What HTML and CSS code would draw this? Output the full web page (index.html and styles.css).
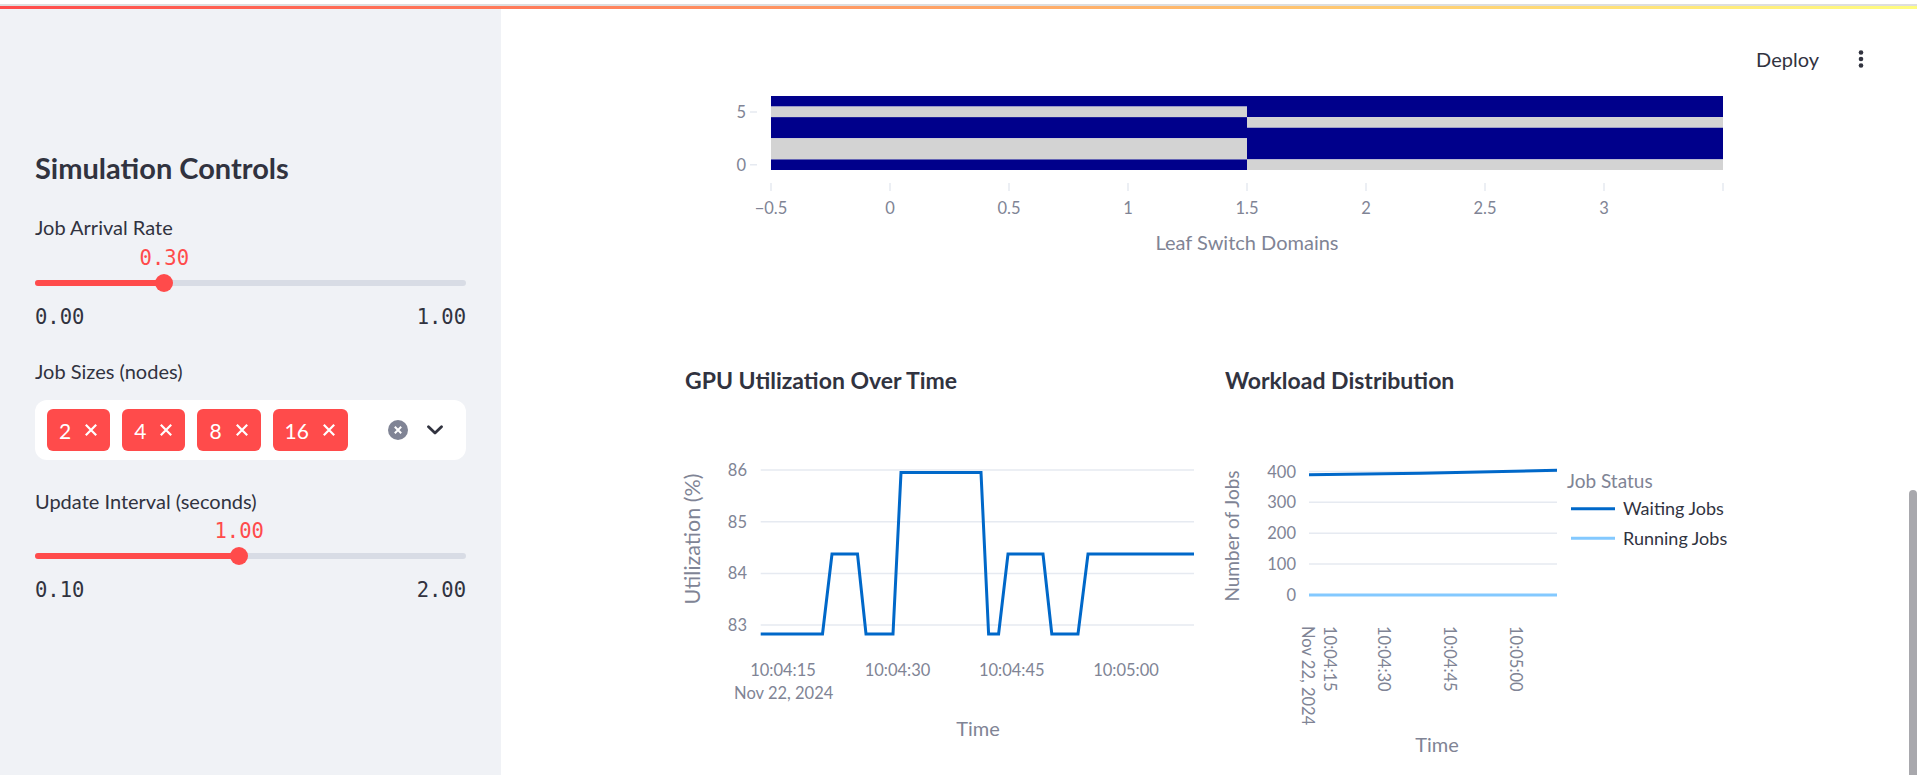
FILE: index.html
```html
<!DOCTYPE html>
<html lang="en">
<head>
<meta charset="utf-8">
<title>GPU Cluster Simulation</title>
<link rel="stylesheet" href="styles.css">
</head>
<body>
<div class="deco"></div>
<div class="app">
  <aside class="sidebar">
    <h2 class="side-title">Simulation Controls</h2>

    <div class="label label-first">Job Arrival Rate</div>
    <div class="slider">
      <div class="value-row"><span class="slider-value" style="left:30%">0.30</span></div>
      <div class="track-wrap">
        <div class="track">
          <div class="track-fill" style="width:30%"></div>
          <div class="thumb" style="left:30%"></div>
        </div>
      </div>
      <div class="minmax"><span>0.00</span><span>1.00</span></div>
    </div>

    <div class="label label-ms">Job Sizes (nodes)</div>
    <div class="multiselect">
      <div class="tags">
        <span class="tag">2<svg class="tag-x" viewBox="0 0 12 12"><path d="M0.8 0.8L11.2 11.2M11.2 0.8L0.8 11.2"/></svg></span>
        <span class="tag">4<svg class="tag-x" viewBox="0 0 12 12"><path d="M0.8 0.8L11.2 11.2M11.2 0.8L0.8 11.2"/></svg></span>
        <span class="tag">8<svg class="tag-x" viewBox="0 0 12 12"><path d="M0.8 0.8L11.2 11.2M11.2 0.8L0.8 11.2"/></svg></span>
        <span class="tag">16<svg class="tag-x" viewBox="0 0 12 12"><path d="M0.8 0.8L11.2 11.2M11.2 0.8L0.8 11.2"/></svg></span>
      </div>
      <svg class="clear" viewBox="0 0 20 20"><circle cx="10" cy="10" r="10"/><path d="M6.8 6.8L13.2 13.2M13.2 6.8L6.8 13.2"/></svg>
      <svg class="chevron" viewBox="0 0 16 10"><path d="M1.5 1.8L8 8L14.5 1.8"/></svg>
    </div>

    <div class="label label-next">Update Interval (seconds)</div>
    <div class="slider slider-tight">
      <div class="value-row"><span class="slider-value" style="left:47.37%">1.00</span></div>
      <div class="track-wrap">
        <div class="track">
          <div class="track-fill" style="width:47.37%"></div>
          <div class="thumb" style="left:47.37%"></div>
        </div>
      </div>
      <div class="minmax"><span>0.10</span><span>2.00</span></div>
    </div>
  </aside>

  <main class="main">
    <div class="header">
      <span class="deploy">Deploy</span>
      <svg class="kebab" viewBox="0 0 24 24"><circle cx="12" cy="5.5" r="2.3"/><circle cx="12" cy="12" r="2.3"/><circle cx="12" cy="18.5" r="2.3"/></svg>
    </div>

    <div class="block">
      <svg class="heatmap" width="1054" height="200" viewBox="0 0 1054 200">
        <g>
          <rect x="86" y="16" width="476" height="10.57" fill="#00008b"/>
          <rect x="86" y="26.57" width="476" height="10.57" fill="#d3d3d3"/>
          <rect x="86" y="37.14" width="476" height="21.15" fill="#00008b"/>
          <rect x="86" y="58.29" width="476" height="21.14" fill="#d3d3d3"/>
          <rect x="86" y="79.43" width="476" height="10.57" fill="#00008b"/>
          <rect x="562" y="16" width="476" height="21.14" fill="#00008b"/>
          <rect x="562" y="37.14" width="476" height="10.57" fill="#d3d3d3"/>
          <rect x="562" y="47.71" width="476" height="31.72" fill="#00008b"/>
          <rect x="562" y="79.43" width="476" height="10.57" fill="#d3d3d3"/>
        </g>
        <g class="tickmarks">
          <path d="M65 31.9H72M65 84.7H72"/>
          <path d="M86 103V111M205 103V111M324 103V111M443 103V111M562 103V111M681 103V111M800 103V111M919 103V111M1038 103V111"/>
        </g>
        <g class="ticktext" text-anchor="end">
          <text x="61" y="38">5</text>
          <text x="61" y="90.7">0</text>
        </g>
        <g class="ticktext" text-anchor="middle">
          <text x="86" y="134">−0.5</text>
          <text x="205" y="134">0</text>
          <text x="324" y="134">0.5</text>
          <text x="443" y="134">1</text>
          <text x="562" y="134">1.5</text>
          <text x="681" y="134">2</text>
          <text x="800" y="134">2.5</text>
          <text x="919" y="134">3</text>
        </g>
        <text class="axis-title" x="562" y="170" text-anchor="middle">Leaf Switch Domains</text>
      </svg>

      <div class="charts-row">
        <section class="chart-col">
          <h3 class="chart-title">GPU Utilization Over Time</h3>
          <svg class="chart" width="514" height="380" viewBox="0 0 514 380">
            <g class="grid">
              <path d="M75.7 74H509M75.7 125.7H509M75.7 177.4H509M75.7 229.1H509"/>
            </g>
            <g class="ticktext" text-anchor="end">
              <text x="62" y="80">86</text>
              <text x="62" y="131.7">85</text>
              <text x="62" y="183.4">84</text>
              <text x="62" y="235.1">83</text>
            </g>
            <text class="axis-title axis-title-lg" transform="translate(15,143) rotate(-90)" text-anchor="middle">Utilization (%)</text>
            <polyline class="line-main" points="75.7,238 137.5,238 147,158 172.5,158 181,238 208,238 216,76.6 296,76.6 303.6,238 313.6,238 323,158 358,158 366.8,238 393,238 403,158 509,158"/>
            <g class="ticktext" text-anchor="middle">
              <text x="98" y="280">10:04:15</text>
              <text x="98.7" y="303">Nov 22, 2024</text>
              <text x="212.5" y="280">10:04:30</text>
              <text x="326.8" y="280">10:04:45</text>
              <text x="441" y="280">10:05:00</text>
            </g>
            <text class="axis-title" x="293" y="340" text-anchor="middle">Time</text>
          </svg>
        </section>

        <section class="chart-col">
          <h3 class="chart-title">Workload Distribution</h3>
          <svg class="chart" width="514" height="380" viewBox="0 0 514 380">
            <g class="grid">
              <path d="M84 75.5H332M84 106.35H332M84 137.2H332M84 168.05H332M84 198.9H332"/>
            </g>
            <g class="ticktext" text-anchor="end">
              <text x="71" y="81.5">400</text>
              <text x="71" y="112.35">300</text>
              <text x="71" y="143.2">200</text>
              <text x="71" y="174.05">100</text>
              <text x="71" y="204.9">0</text>
            </g>
            <text class="axis-title axis-title-sm" transform="translate(14,140) rotate(-90)" text-anchor="middle">Number of Jobs</text>
            <polyline class="line-run" points="84,199 332,199"/>
            <polyline class="line-main" points="84,78.7 196,77.3 332,74.3"/>
            <text class="legend-title" x="342" y="92">Job Status</text>
            <path class="line-main" d="M346 112.7H390"/>
            <path class="line-run" d="M346 142.3H390"/>
            <text class="legend-text" x="398" y="119.2">Waiting Jobs</text>
            <text class="legend-text" x="398" y="148.8">Running Jobs</text>
            <g class="ticktext">
              <text transform="translate(99.3,230) rotate(90)">10:04:15</text>
              <text transform="translate(77,230) rotate(90)">Nov 22, 2024</text>
              <text transform="translate(153.2,230) rotate(90)">10:04:30</text>
              <text transform="translate(219.3,230) rotate(90)">10:04:45</text>
              <text transform="translate(285,230) rotate(90)">10:05:00</text>
            </g>
            <text class="axis-title" x="212" y="356" text-anchor="middle">Time</text>
          </svg>
        </section>
      </div>
    </div>

    <div class="scrollbar"></div>
  </main>
</div>
</body>
</html>
```

FILE: styles.css
```css
html, body {
  margin: 0;
  padding: 0;
  background: #ffffff;
}

body {
  font-family: "Lato", "Noto Sans", sans-serif;
  color: #31333f;
  overflow: hidden;
}

.deco {
  margin-top: 4px;
  height: 3px;
  border-top: 2px solid #dedede;
  background: linear-gradient(90deg, #ff4b4b, #fffd80);
}

.app {
  display: flex;
  height: 766px;
  overflow: hidden;
}

/* ---------- Sidebar ---------- */
.sidebar {
  width: 501px;
  flex: none;
  box-sizing: border-box;
  background: #f0f2f6;
  padding: 139px 35px 0 35px;
}

.side-title {
  margin: 0;
  font-size: 29px;
  font-weight: 700;
  line-height: 40px;
  color: #31333f;
}

.label {
  font-size: 20px;
  line-height: 28px;
  color: #31333f;
}

.label-first { margin-top: 25px; }
.label-ms { margin-top: 28px; }
.label-next { margin-top: 27px; }

.slider .value-row {
  position: relative;
  height: 24px;
  margin-top: 5px;
}

.slider-tight .value-row { margin-top: 4px; }

.slider-value {
  position: absolute;
  top: 0;
  transform: translateX(-50%);
  font-family: "DejaVu Sans Mono", "Liberation Mono", monospace;
  font-size: 20.5px;
  line-height: 24px;
  color: #ff4b4b;
}

.track-wrap {
  height: 26px;
  display: flex;
  align-items: center;
}

.track {
  position: relative;
  width: 100%;
  height: 6px;
  border-radius: 3px;
  background: #d8dce5;
}

.track-fill {
  height: 100%;
  border-radius: 3px;
  background: #ff4b4b;
}

.thumb {
  position: absolute;
  top: 50%;
  width: 18px;
  height: 18px;
  border-radius: 50%;
  background: #ff4b4b;
  transform: translate(-50%, -50%);
}

.minmax {
  margin-top: 9px;
  height: 24px;
  display: flex;
  justify-content: space-between;
  font-family: "DejaVu Sans Mono", "Liberation Mono", monospace;
  font-size: 20.5px;
  line-height: 24px;
  color: #31333f;
}

.multiselect {
  margin-top: 15px;
  height: 60px;
  box-sizing: border-box;
  background: #ffffff;
  border-radius: 12px;
  display: flex;
  align-items: center;
  padding: 0 23px 0 12px;
}

.tags {
  flex: 1;
  display: flex;
  gap: 12px;
}

.tag {
  height: 42px;
  box-sizing: border-box;
  display: flex;
  align-items: center;
  gap: 14px;
  padding: 0 13px 0 12px;
  background: #ff4b4b;
  color: #ffffff;
  border-radius: 6px;
  font-size: 21px;
}

.tag-x {
  width: 12px;
  height: 12px;
}

.tag-x path {
  stroke: #ffffff;
  stroke-width: 2.2;
  fill: none;
}

.clear {
  width: 20px;
  height: 20px;
  margin-right: 19px;
}

.clear circle { fill: #808495; }
.clear path { stroke: #ffffff; stroke-width: 2; fill: none; }

.chevron {
  width: 16px;
  height: 10px;
}

.chevron path {
  stroke: #31333f;
  stroke-width: 2.8;
  fill: none;
  stroke-linecap: round;
  stroke-linejoin: round;
}

/* ---------- Main ---------- */
.main {
  flex: 1;
  position: relative;
  overflow: hidden;
  background: #ffffff;
}

.header {
  position: absolute;
  top: 36px;
  right: 44px;
  display: flex;
  align-items: center;
  gap: 30px;
}

.deploy {
  font-size: 20px;
  line-height: 28px;
  color: #31333f;
}

.kebab {
  width: 24px;
  height: 24px;
}

.kebab circle { fill: #31333f; }

.block {
  margin-left: 184px;
  width: 1054px;
  padding-top: 71px;
}

.heatmap, .chart {
  display: block;
  overflow: visible;
}

.charts-row {
  display: flex;
  gap: 26px;
  margin-top: 84px;
}

.chart-col {
  width: 514px;
  flex: none;
}

.chart-title {
  margin: 0;
  font-size: 23px;
  font-weight: 700;
  line-height: 32px;
  color: #31333f;
}

.tickmarks path {
  stroke: #e6eaf1;
  stroke-width: 1.5;
  fill: none;
}

.grid path {
  stroke: #e6eaf1;
  stroke-width: 1.5;
  fill: none;
}

.ticktext text {
  font-family: "Lato", "Noto Sans", sans-serif;
  font-size: 16.5px;
  fill: #808495;
}

.axis-title {
  font-family: "Lato", "Noto Sans", sans-serif;
  font-size: 20px;
  fill: #808495;
}

.axis-title-lg { font-size: 21.5px; }
.axis-title-sm { font-size: 19px; }

.legend-title {
  font-family: "Lato", "Noto Sans", sans-serif;
  font-size: 19px;
  fill: #808495;
}

.legend-text {
  font-family: "Lato", "Noto Sans", sans-serif;
  font-size: 18px;
  fill: #31333f;
}

.line-main {
  fill: none;
  stroke: #0068c9;
  stroke-width: 3;
}

.line-run {
  fill: none;
  stroke: #83c9ff;
  stroke-width: 3;
}

.scrollbar {
  position: absolute;
  right: 0;
  top: 481px;
  bottom: 0;
  width: 8px;
  background: #a8a8ad;
  border-radius: 4px 4px 0 0;
}
```
